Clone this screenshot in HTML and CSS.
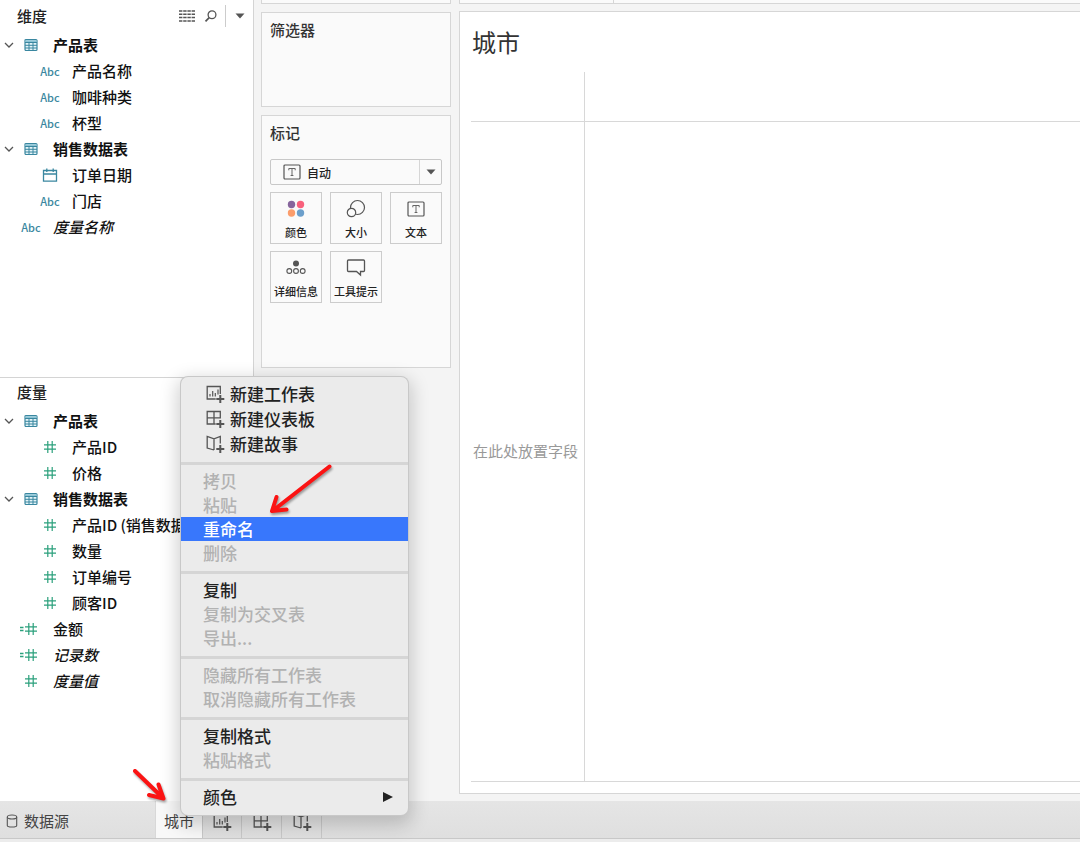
FILE: index.html
```html
<!DOCTYPE html>
<html lang="zh-CN">
<head>
<meta charset="utf-8">
<meta name="viewport" content="width=device-width, initial-scale=1">
<title>城市</title>
<link rel="stylesheet" href="styles.css">
</head>
<body>
<svg class="sprite" aria-hidden="true">
  <symbol id="i-chevron" viewBox="0 0 10 10"><path d="M1 3 5 7 9 3" fill="none" stroke="#555" stroke-width="1.300"/></symbol>
  <symbol id="i-table" viewBox="0 0 14 14"><rect x="1" y="1.500" width="12" height="11" rx="1" fill="#e4f4f8" stroke="#3a87a0" stroke-width="1.200"/><path d="M1.500 3.200h11" stroke="#8cc3d4" stroke-width="2"/><path d="M1 4.500h12M1 7.300h12M1 10h12M5 4.500v8M9 4.500v8" stroke="#3a87a0"/></symbol>
  <symbol id="i-date" viewBox="0 0 16 16"><path d="M1.500 3.500h13v10.700h-13zM1.500 7h13M4.800 1.500v3.500M11.200 1.500v3.500" fill="none" stroke="#3a87a0" stroke-width="1.300"/></symbol>
  <symbol id="i-num" viewBox="0 0 24 14"><path d="M6 4.800h12M6 9.200h12M9.800 1v12M14.200 1v12" stroke="#2ba07c" stroke-width="1.200"/></symbol>
  <symbol id="i-calc" viewBox="0 0 24 14"><path d="M6 4.800h12M6 9.200h12M9.800 1v12M14.200 1v12" stroke="#2ba07c" stroke-width="1.200"/><path d="M1 5.500h3.500M1 8.500h3.500" stroke="#2ba07c" stroke-width="1.400"/></symbol>
  <symbol id="i-text" viewBox="0 0 18 16"><rect x="1" y="1" width="16" height="14" rx="1" fill="none" stroke="#555" stroke-width="1.200"/><path d="M5.800 6.300V4.500h6.400v1.800M9 4.500v7M7.600 11.500h2.800" fill="none" stroke="#666"/></symbol>
  <symbol id="i-sheet" viewBox="0 0 20 20"><path d="M15.300 10V2.500H2.200v12.500h8.500" fill="none" stroke="currentColor" stroke-width="1.300"/><path d="M5 12.500V10M7.700 12.500V7M10.300 12.500V9M13 10.500V5.500" stroke="currentColor" stroke-width="1.200"/><path d="M15.300 11v8M11.300 15h8" stroke="currentColor" stroke-width="2"/></symbol>
  <symbol id="i-dash" viewBox="0 0 20 20"><path d="M15.300 9.500V2.500H2.200v12.500h8.500M9 2.500v12.500M2.200 8.800h13.100" fill="none" stroke="currentColor" stroke-width="1.300"/><path d="M15.300 11v8M11.300 15h8" stroke="currentColor" stroke-width="2"/></symbol>
  <symbol id="i-story" viewBox="0 0 20 20"><path d="M15.300 9.500V2.500L9 4.800 2.200 2.500V14L9 16M9 4.800V16" fill="none" stroke="currentColor" stroke-width="1.300"/><path d="M15.300 11v8M11.300 15h8" stroke="currentColor" stroke-width="2"/></symbol>
</svg>

<div class="app">
  <main class="workspace">
    <aside class="data-pane">
      <section class="fields fields-dim">
        <header class="fields-head">
          <h2>维度</h2>
          <div class="tools">
            <button type="button" aria-label="视图"><svg width="16" height="14" viewBox="0 0 16 14"><path d="M0 2h16M0 5.300h16M0 8.600h16M0 11.900h16" stroke="#555" stroke-width="1.500" stroke-dasharray="3.400 .8"/></svg></button>
            <button type="button" aria-label="查找"><svg width="14" height="14" viewBox="0 0 14 14"><circle cx="8" cy="5.800" r="3.900" fill="none" stroke="#555" stroke-width="1.300"/><path d="M5.200 8.700 1.500 12.400" stroke="#555" stroke-width="1.700"/></svg></button>
            <button type="button" class="more" aria-label="更多"><svg width="10" height="6" viewBox="0 0 10 6"><path d="M.5.500h9L5 5.500z" fill="#555"/></svg></button>
          </div>
        </header>
        <ul class="tree">
          <li class="row group"><svg class="chev"><use href="#i-chevron"/></svg><span class="slot"><svg class="ic14"><use href="#i-table"/></svg></span>产品表</li>
          <li class="row child"><span class="slot abc">Abc</span>产品名称</li>
          <li class="row child"><span class="slot abc">Abc</span>咖啡种类</li>
          <li class="row child"><span class="slot abc">Abc</span>杯型</li>
          <li class="row group"><svg class="chev"><use href="#i-chevron"/></svg><span class="slot"><svg class="ic14"><use href="#i-table"/></svg></span>销售数据表</li>
          <li class="row child"><span class="slot"><svg class="ic16"><use href="#i-date"/></svg></span>订单日期</li>
          <li class="row child"><span class="slot abc">Abc</span>门店</li>
          <li class="row root"><span class="slot abc">Abc</span><em>度量名称</em></li>
        </ul>
      </section>
      <section class="fields fields-measure">
        <header class="fields-head"><h2>度量</h2></header>
        <ul class="tree">
          <li class="row group"><svg class="chev"><use href="#i-chevron"/></svg><span class="slot"><svg class="ic14"><use href="#i-table"/></svg></span>产品表</li>
          <li class="row child"><span class="slot"><svg class="num"><use href="#i-num"/></svg></span>产品ID</li>
          <li class="row child"><span class="slot"><svg class="num"><use href="#i-num"/></svg></span>价格</li>
          <li class="row group"><svg class="chev"><use href="#i-chevron"/></svg><span class="slot"><svg class="ic14"><use href="#i-table"/></svg></span>销售数据表</li>
          <li class="row child"><span class="slot"><svg class="num"><use href="#i-num"/></svg></span>产品ID (销售数据</li>
          <li class="row child"><span class="slot"><svg class="num"><use href="#i-num"/></svg></span>数量</li>
          <li class="row child"><span class="slot"><svg class="num"><use href="#i-num"/></svg></span>订单编号</li>
          <li class="row child"><span class="slot"><svg class="num"><use href="#i-num"/></svg></span>顾客ID</li>
          <li class="row root"><span class="slot"><svg class="num"><use href="#i-calc"/></svg></span>金额</li>
          <li class="row root"><span class="slot"><svg class="num"><use href="#i-calc"/></svg></span><em>记录数</em></li>
          <li class="row root"><span class="slot"><svg class="num"><use href="#i-num"/></svg></span><em>度量值</em></li>
        </ul>
      </section>
    </aside>

    <div class="shelves">
      <div class="card card-edge"></div>
      <section class="card card-filter"><h3>筛选器</h3></section>
      <section class="card card-marks">
        <h3>标记</h3>
        <label class="mark-type">
          <svg width="18" height="16"><use href="#i-text"/></svg>
          <select aria-label="标记类型"><option>自动</option></select>
          <span class="mark-arrow"><svg width="10" height="6" viewBox="0 0 10 6"><path d="M.5.500h9L5 5.500z" fill="#555"/></svg></span>
        </label>
        <div class="marks">
          <button type="button"><svg width="20" height="20" viewBox="0 0 20 20"><circle cx="5.500" cy="5.500" r="3.700" fill="#86659c"/><circle cx="14.500" cy="5.500" r="3.700" fill="#f8607c"/><circle cx="5.500" cy="14" r="3.700" fill="#fb9d6c"/><circle cx="14.500" cy="14" r="3.700" fill="#6c9fcb"/></svg>颜色</button>
          <button type="button"><svg width="20" height="20" viewBox="0 0 20 20" fill="none" stroke="#555" stroke-width="1.200"><circle cx="11.500" cy="8.500" r="7"/><circle cx="5.500" cy="13.500" r="4.200" fill="#fafafa"/></svg>大小</button>
          <button type="button"><svg width="18" height="20" viewBox="0 -2 18 20"><use href="#i-text" width="18" height="16"/></svg>文本</button>
          <button type="button"><svg width="20" height="20" viewBox="0 0 20 20"><circle cx="10" cy="5.500" r="3" fill="#555"/><g fill="none" stroke="#555" stroke-width="1.100"><circle cx="3.300" cy="13" r="2.400"/><circle cx="10" cy="13" r="2.400"/><circle cx="16.700" cy="13" r="2.400"/></g></svg>详细信息</button>
          <button type="button"><svg width="20" height="20" viewBox="0 0 20 20"><path d="M2.500 2h15q1 0 1 1v9.500q0 1-1 1h-3V17l-4-3.500h-8q-1 0-1-1V3q0-1 1-1z" fill="none" stroke="#555" stroke-width="1.300"/></svg>工具提示</button>
        </div>
      </section>
    </div>

    <div class="canvas">
      <div class="shelf-edge"><span></span></div>
      <section class="view">
        <h1>城市</h1>
        <div class="drop-grid">
          <div class="cell corner"></div>
          <div class="cell columns"></div>
          <div class="cell rows">在此处放置字段</div>
          <div class="cell body"></div>
        </div>
      </section>
    </div>
  </main>

  <nav class="tabs">
    <button type="button" class="tab source"><svg width="12" height="14" viewBox="0 0 12 14" fill="none" stroke="#555" stroke-width="1.100"><ellipse cx="6" cy="3" rx="4.700" ry="2"/><path d="M1.300 3v8.500q0 1.500 4.700 1.500t4.700-1.500V3"/></svg>数据源</button>
    <button type="button" class="tab active">城市</button>
    <button type="button" class="tab add" aria-label="新建工作表"><svg width="20" height="20"><use href="#i-sheet"/></svg></button>
    <button type="button" class="tab add" aria-label="新建仪表板"><svg width="20" height="20"><use href="#i-dash"/></svg></button>
    <button type="button" class="tab add" aria-label="新建故事"><svg width="20" height="20"><use href="#i-story"/></svg></button>
  </nav>
</div>

<div class="menu" role="menu">
  <div class="menu-group new">
    <button type="button" role="menuitem"><svg width="20" height="20"><use href="#i-sheet"/></svg>新建工作表</button>
    <button type="button" role="menuitem"><svg width="20" height="20"><use href="#i-dash"/></svg>新建仪表板</button>
    <button type="button" role="menuitem"><svg width="20" height="20"><use href="#i-story"/></svg>新建故事</button>
  </div>
  <div class="menu-group">
    <button type="button" role="menuitem" disabled>拷贝</button>
    <button type="button" role="menuitem" disabled>粘贴</button>
    <button type="button" role="menuitem" class="selected">重命名</button>
    <button type="button" role="menuitem" disabled>删除</button>
  </div>
  <div class="menu-group">
    <button type="button" role="menuitem">复制</button>
    <button type="button" role="menuitem" disabled>复制为交叉表</button>
    <button type="button" role="menuitem" disabled>导出...</button>
  </div>
  <div class="menu-group">
    <button type="button" role="menuitem" disabled>隐藏所有工作表</button>
    <button type="button" role="menuitem" disabled>取消隐藏所有工作表</button>
  </div>
  <div class="menu-group">
    <button type="button" role="menuitem">复制格式</button>
    <button type="button" role="menuitem" disabled>粘贴格式</button>
  </div>
  <div class="menu-group">
    <button type="button" role="menuitem">颜色<svg class="sub" width="10" height="12" viewBox="0 0 10 12"><path d="M0 1v10l10-5z" fill="#222"/></svg></button>
  </div>
</div>

<svg class="arrow arrow-rename" width="70" height="60" viewBox="0 0 70 60"><path d="M64.500 6.500 8 50.500M11.500 37 7 51 21.500 49.500" /></svg>
<svg class="arrow arrow-tab" width="40" height="40" viewBox="0 0 40 40"><path d="M5 6 33 33M28.500 19.500 33.500 33.500 19 30" /></svg>
</body>
</html>
```

FILE: styles.css
```css
* { box-sizing: border-box; }
body {
  margin: 0;
  position: relative;
  background: #f4f4f4;
  color: #1c1c1c;
  font: 500 15px/26px "Noto Sans CJK SC", sans-serif;
}
button, select {
  font: inherit;
  color: inherit;
  background: none;
  border: 0;
  padding: 0;
  margin: 0;
}
h1, h2, h3, ul { margin: 0; padding: 0; list-style: none; }
h2, h3 { font-size: 15px; font-weight: 500; }
svg { flex: none; display: block; }
.sprite { position: absolute; width: 0; height: 0; }

.app { min-height: 100vh; display: flex; flex-direction: column; }
.workspace { flex: 1; display: flex; }

/* data pane */
.data-pane {
  width: 254px;
  flex: none;
  display: flex;
  flex-direction: column;
  background: #fff;
  border-right: 1px solid #d4d4d4;
}
.fields-dim { min-height: 377px; }
.fields-measure { border-top: 1px solid #d4d4d4; flex: 1; }
.fields-head {
  display: flex;
  justify-content: space-between;
  align-items: center;
  padding: 0 8px 0 17px;
  height: 32px;
}
.fields-measure .fields-head { height: 30px; padding-bottom: 2px; }
.fields-head h2 { color: #222; }
.tools { display: flex; align-items: center; gap: 9px; }
.tools .more {
  height: 22px;
  padding-left: 9px;
  border-left: 1px solid #ccc;
  margin-left: -2px;
}
.row {
  display: flex;
  align-items: center;
  height: 26px;
  white-space: nowrap;
  color: #111;
}
.group { padding-left: 4px; font-weight: 700; }
.child { padding-left: 38px; }
.root { padding-left: 19px; }
.chev { width: 10px; height: 10px; margin-right: 5px; }
.slot { width: 24px; margin-right: 10px; display: flex; justify-content: center; }
.abc { color: #3a87a0; font-size: 11px; font-weight: 500; }
.ic14 { width: 14px; height: 14px; }
.ic16 { width: 16px; height: 16px; }
.num { width: 24px; height: 14px; }

/* shelves */
.shelves {
  width: 205px;
  flex: none;
  display: flex;
  flex-direction: column;
  gap: 8px;
  padding: 0 8px 8px 7px;
}
.card { background: #fafafa; border: 1px solid #d6d6d6; padding: 4px 8px; }
.card h3 { color: #333; }
.card-edge { height: 4px; padding: 0; border-top: 0; }
.card-filter { min-height: 95px; }
.card-marks { min-height: 253px; }
.mark-type {
  display: flex;
  align-items: center;
  height: 26px;
  margin: 13px 0 7px;
  padding-left: 12px;
  border: 1px solid #c8c8c8;
  border-radius: 2px;
  font-size: 12px;
}
.mark-type select {
  flex: 1;
  min-width: 0;
  appearance: none;
  padding: 0 0 2px 6px;
  height: 24px;
  color: #222;
}
.mark-arrow {
  align-self: stretch;
  width: 22px;
  border-left: 1px solid #d6d6d6;
  display: flex;
  align-items: center;
  justify-content: center;
}
.marks { display: grid; grid-template-columns: repeat(3, 1fr); gap: 7px 8px; }
.marks button {
  height: 52px;
  display: flex;
  flex-direction: column;
  align-items: center;
  gap: 5px;
  padding-top: 6px;
  border: 1px solid #ccc;
  font-size: 11px;
  line-height: 16px;
  white-space: nowrap;
  color: #222;
}

/* view */
.canvas { flex: 1; min-width: 0; display: flex; flex-direction: column; gap: 7px; padding-bottom: 7px; }
.shelf-edge { height: 4px; border: 1px solid #d6d6d6; border-width: 0 0 1px 1px; background: #fafafa; }
.shelf-edge span { display: block; width: 154px; height: 3px; border-right: 1px solid #d6d6d6; }
.view {
  flex: 1;
  display: flex;
  flex-direction: column;
  background: #fff;
  border: 1px solid #d6d6d6;
  border-right: 0;
  padding: 13px 0 11px 11px;
}
.view h1 { font-size: 24px; font-weight: 400; line-height: 34px; color: #333; padding-left: 1px; margin-bottom: 13px; }
.drop-grid {
  flex: 1;
  display: grid;
  grid-template-columns: 114px 1fr;
  grid-template-rows: 50px 1fr;
}
.cell { border: 0 solid #d8d8d8; border-bottom-width: 1px; }
.corner, .rows { border-right-width: 1px; }
.rows { display: flex; align-items: center; padding: 0 0 2px 2px; color: #999; font-weight: 400; white-space: nowrap; }

/* sheet tabs */
.tabs {
  display: flex;
  height: 41px;
  padding-bottom: 2px;
  background: linear-gradient(#e5e5e5, #dfdfdf 37px, #c8c8c8 37px, #c8c8c8 38px, #ececec 38px);
}
.tab { height: 37px; display: flex; align-items: center; justify-content: center; color: #444; border-right: 1px solid #c8c8c8; font-weight: 400; }
.source { width: 156px; justify-content: flex-start; gap: 6px; padding: 2px 0 0 6px; border-right-color: #d8d8d8; }
.active { width: 47px; background: #f8f8f8; padding-top: 2px; }
.add { width: 39px; padding-top: 4px; color: #555; }
.add + .add { width: 40px; }

/* context menu */
.menu {
  position: absolute;
  left: 181px;
  top: 377px;
  width: 227px;
  background: #ebebeb;
  border-radius: 7px;
  box-shadow: 0 0 0 1px #c8c8c8, 0 6px 18px 4px rgba(0, 0, 0, .18);
}
.menu-group { padding: 4px 0 6px; }
.menu-group + .menu-group { border-top: 3px solid #d5d5d5; }
.menu button {
  display: flex;
  align-items: center;
  width: 100%;
  height: 24px;
  padding: 0 15px 0 22px;
  font-size: 17px;
  line-height: 24px;
  color: #222;
}
.menu .new button { height: 25px; gap: 5px; padding-left: 24px; }
.menu .new svg { color: #555; }
.menu button:disabled { color: #b2b2b2; }
.menu .selected { background: #3877fc; color: #fff; }
.sub { margin-left: auto; }

/* annotation arrows */
.arrow {
  position: absolute;
  fill: none;
  stroke: #fb1313;
  stroke-width: 4;
  stroke-linecap: round;
  stroke-linejoin: round;
  filter: drop-shadow(1px 2px 1px rgba(0, 0, 0, .35));
}
.arrow-rename { left: 265px; top: 460px; }
.arrow-tab { left: 130px; top: 765px; }
```
